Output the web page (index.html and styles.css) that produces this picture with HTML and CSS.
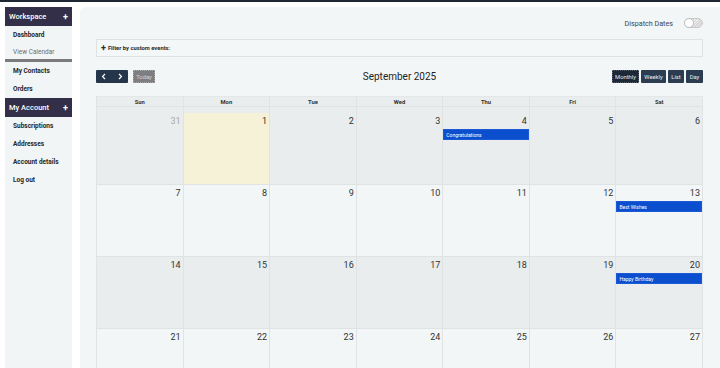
FILE: index.html
```html
<!DOCTYPE html>
<html>
<head>
<meta charset="utf-8">
<link rel="stylesheet" href="styles.css">
</head>
<body>
<div class="topbar"></div>
<div class="layout">
  <aside class="sidebar">
    <div class="side-head"><span>Workspace</span><span class="plus">+</span></div>
    <a class="side-item">Dashboard</a>
    <a class="side-item muted">View Calendar</a>
    <div class="side-sep"></div>
    <a class="side-item">My Contacts</a>
    <a class="side-item">Orders</a>
    <div class="side-head"><span>My Account</span><span class="plus">+</span></div>
    <a class="side-item">Subscriptions</a>
    <a class="side-item">Addresses</a>
    <a class="side-item">Account details</a>
    <a class="side-item">Log out</a>
  </aside>
  <main class="main">
    <div class="dispatch">
      <span class="dispatch-label">Dispatch Dates</span>
      <span class="toggle"><span class="knob"></span></span>
    </div>
    <div class="filter"><span class="fplus">+</span> Filter by custom events:</div>
    <div class="toolbar">
      <div class="tb-left">
        <div class="btn-group">
          <span class="nav-btn"><svg width="6" height="7" viewBox="0 0 6 7"><path d="M4 1 L1.5 3.5 L4 6" fill="none" stroke="#fff" stroke-width="1.2"/></svg></span>
          <span class="nav-btn"><svg width="6" height="7" viewBox="0 0 6 7"><path d="M2 1 L4.5 3.5 L2 6" fill="none" stroke="#fff" stroke-width="1.2"/></svg></span>
        </div>
        <span class="today-btn">Today</span>
      </div>
      <div class="title">September 2025</div>
      <div class="tb-right">
        <span class="view-btn active">Monthly</span>
        <span class="view-btn">Weekly</span>
        <span class="view-btn">List</span>
        <span class="view-btn">Day</span>
      </div>
    </div>
    <div class="calendar">
      <div class="cal-head">
        <div class="hcell">Sun</div><div class="hcell">Mon</div><div class="hcell">Tue</div><div class="hcell">Wed</div><div class="hcell">Thu</div><div class="hcell">Fri</div><div class="hcell">Sat</div>
      </div>
      <div class="week grey first">
        <div class="day"><div class="num other">31</div></div>
        <div class="day today"><div class="num">1</div></div>
        <div class="day"><div class="num">2</div></div>
        <div class="day"><div class="num">3</div></div>
        <div class="day"><div class="num">4</div><div class="event">Congratulations</div></div>
        <div class="day"><div class="num">5</div></div>
        <div class="day"><div class="num">6</div></div>
      </div>
      <div class="week light">
        <div class="day"><div class="num">7</div></div>
        <div class="day"><div class="num">8</div></div>
        <div class="day"><div class="num">9</div></div>
        <div class="day"><div class="num">10</div></div>
        <div class="day"><div class="num">11</div></div>
        <div class="day"><div class="num">12</div></div>
        <div class="day"><div class="num">13</div><div class="event">Best Wishes</div></div>
      </div>
      <div class="week grey">
        <div class="day"><div class="num">14</div></div>
        <div class="day"><div class="num">15</div></div>
        <div class="day"><div class="num">16</div></div>
        <div class="day"><div class="num">17</div></div>
        <div class="day"><div class="num">18</div></div>
        <div class="day"><div class="num">19</div></div>
        <div class="day"><div class="num">20</div><div class="event">Happy Birthday</div></div>
      </div>
      <div class="week light">
        <div class="day"><div class="num">21</div></div>
        <div class="day"><div class="num">22</div></div>
        <div class="day"><div class="num">23</div></div>
        <div class="day"><div class="num">24</div></div>
        <div class="day"><div class="num">25</div></div>
        <div class="day"><div class="num">26</div></div>
        <div class="day"><div class="num">27</div></div>
      </div>
    </div>
  </main>
</div>
</body>
</html>
```
FILE: styles.css
```css
* { box-sizing: border-box; }
html, body { margin: 0; padding: 0; }
body {
  background: #ffffff;
  font-family: Roboto, "Liberation Sans", Arial, sans-serif;
  color: #222;
  height: 368px;
  overflow: hidden;
}
.topbar { height: 2px; background: #1e2733; }
.layout {
  display: flex;
  gap: 8px;
  padding: 5px 0 0 5px;
  height: 366px;
  overflow: hidden;
}
.sidebar {
  width: 67px;
  flex: none;
  background: #f1f5f6;
  display: flex;
  flex-direction: column;
}
.sidebar > * { flex: none; }
.side-head {
  height: 19px;
  background: #332f48;
  color: #fff;
  font-size: 7.5px;
  font-weight: 500;
  display: flex;
  align-items: center;
  justify-content: space-between;
  padding: 0 4px 0 4px;
}
.side-head .plus { font-size: 9px; font-weight: 700; }
.side-item {
  height: 18px;
  display: flex;
  align-items: center;
  padding-left: 8px;
  font-size: 6.5px;
  font-weight: 700;
  color: #262626;
}
.side-item.muted { color: #6e6e6e; font-weight: 400; height: 15px; padding-top: 1px; }
.side-sep { height: 3px; background: #7b7b7e; }
.main {
  flex: 1;
  background: #f2f6f7;
  border-top-left-radius: 6px;
  padding: 10px 17px 0 16px;
  display: flex;
  flex-direction: column;
  overflow: hidden;
}
.main > * { flex: none; }
.dispatch {
  height: 12px;
  display: flex;
  justify-content: flex-end;
  align-items: center;
  gap: 11px;
}
.dispatch-label { font-size: 7.2px; color: #444; }
.toggle {
  width: 19px;
  height: 10px;
  border: 1px solid #c9c9c9;
  border-radius: 5px;
  background: repeating-linear-gradient(135deg, #d4d4d4 0 1px, #ececec 1px 2px);
  position: relative;
}
.knob {
  position: absolute;
  left: -1px;
  top: -1px;
  width: 10px;
  height: 10px;
  border-radius: 50%;
  background: #fff;
  border: 1px solid #bdbdbd;
}
.filter {
  margin-top: 10px;
  height: 18px;
  border: 1px solid #dde2e3;
  background: #f4f7f8;
  display: flex;
  align-items: center;
  padding-left: 4px;
  font-size: 5.8px;
  font-weight: 700;
  color: #2a2a2a;
  gap: 2px;
}
.fplus { font-size: 9px; font-weight: 700; line-height: 1; }
.toolbar {
  margin-top: 13px;
  height: 13px;
  display: flex;
  align-items: center;
  justify-content: space-between;
  position: relative;
}
.tb-left, .tb-right { display: flex; align-items: center; gap: 5px; }
.tb-right { gap: 2px; }
.btn-group {
  display: flex;
  background: #25354a;
  border-radius: 1px;
  width: 32px;
  height: 13px;
}
.nav-btn {
  flex: 1;
  display: flex;
  align-items: center;
  justify-content: center;
}
.today-btn {
  width: 22px;
  height: 13px;
  background: #7e7e82;
  border: 1px dotted #a9a9ad;
  color: #d6d6d8;
  font-size: 5.8px;
  display: flex;
  align-items: center;
  justify-content: center;
}
.title {
  position: absolute;
  left: 0;
  right: 0;
  text-align: center;
  font-size: 10px;
  color: #222;
  pointer-events: none;
}
.view-btn {
  height: 13px;
  background: #2c3d51;
  color: #e8ecf0;
  font-size: 5.8px;
  display: flex;
  align-items: center;
  justify-content: center;
  padding: 0 3px;
  border-radius: 1px;
}
.view-btn.active { background: #1c2836; border: 1px dotted #55606c; }
.view-btn:nth-child(1) { width: 27px; }
.view-btn:nth-child(2) { width: 25px; }
.view-btn:nth-child(3) { width: 16px; }
.view-btn:nth-child(4) { width: 17px; }
.calendar {
  margin-top: 13px;
  border-left: 1px solid #dfe3e4;
}
.cal-head, .week {
  display: grid;
  grid-template-columns: repeat(7, 1fr);
}
.cal-head { background: #e9edee; height: 11px; border-bottom: 1px solid #dfe3e4; border-top: 1px solid #e3e7e8; }
.hcell {
  font-size: 5.8px;
  font-weight: 700;
  color: #333;
  display: flex;
  align-items: center;
  justify-content: center;
  border-right: 1px solid #dfe3e4;
}
.week { height: 72px; border-bottom: 1px solid #dfe3e4; }
.week.first { height: 78px; }
.week.grey { background: #e9edee; }
.week.light { background: #f2f6f7; }
.day {
  border-right: 1px solid #dfe3e4;
  display: flex;
  flex-direction: column;
  padding-top: 2px;
}
.week.first .day { padding-top: 8px; }
.day.today { background: linear-gradient(to bottom, transparent 6px, #f5f2d7 6px); }
.num {
  font-size: 9px;
  color: #333;
  text-align: right;
  padding-right: 2px;
  line-height: 12px;
}
.num.other { color: #a9a9a9; }
.event {
  margin: 2px 0 0 0;
  height: 11px;
  background: #0b4fce;
  border: 1px solid #1b5ad4;
  color: #fff;
  font-size: 5px;
  display: flex;
  align-items: center;
  padding-left: 2px;
}
```
